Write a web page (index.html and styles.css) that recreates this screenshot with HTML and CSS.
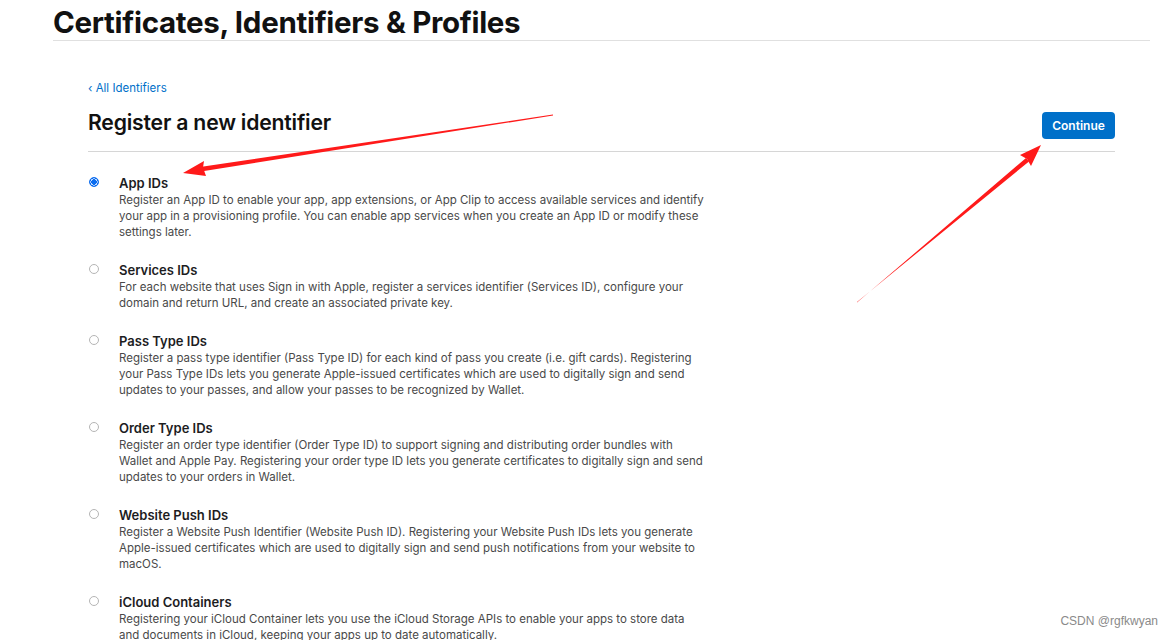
FILE: index.html
```html
<!DOCTYPE html>
<html>
<head>
<meta charset="utf-8">
<link rel="stylesheet" href="styles.css">
</head>
<body>
<div class="page">
  <header class="top">
    <h1 class="top-title">Certificates, Identifiers &amp; Profiles</h1>
  </header>
  <main class="content">
    <a class="back">‹ All Identifiers</a>
    <div class="head">
      <h2 class="head-title">Register a new identifier</h2>
      <button class="btn">Continue</button>
    </div>
    <ul class="list">
      <li class="item">
        <span class="radio checked"></span>
        <div class="body">
          <div class="name">App IDs</div>
          <p class="desc">Register an App ID to enable your app, app extensions, or App Clip to access available services and identify your app in a provisioning profile. You can enable app services when you create an App ID or modify these settings later.</p>
        </div>
      </li>
      <li class="item">
        <span class="radio"></span>
        <div class="body">
          <div class="name">Services IDs</div>
          <p class="desc">For each website that uses Sign in with Apple, register a services identifier (Services ID), configure your domain and return URL, and create an associated private key.</p>
        </div>
      </li>
      <li class="item">
        <span class="radio"></span>
        <div class="body">
          <div class="name">Pass Type IDs</div>
          <p class="desc">Register a pass type identifier (Pass Type ID) for each kind of pass you create (i.e. gift cards). Registering your Pass Type IDs lets you generate Apple-issued certificates which are used to digitally sign and send updates to your passes, and allow your passes to be recognized by Wallet.</p>
        </div>
      </li>
      <li class="item">
        <span class="radio"></span>
        <div class="body">
          <div class="name">Order Type IDs</div>
          <p class="desc">Register an order type identifier (Order Type ID) to support signing and distributing order bundles with Wallet and Apple Pay. Registering your order type ID lets you generate certificates to digitally sign and send updates to your orders in Wallet.</p>
        </div>
      </li>
      <li class="item">
        <span class="radio"></span>
        <div class="body">
          <div class="name">Website Push IDs</div>
          <p class="desc">Register a Website Push Identifier (Website Push ID). Registering your Website Push IDs lets you generate Apple-issued certificates which are used to digitally sign and send push notifications from your website to macOS.</p>
        </div>
      </li>
      <li class="item">
        <span class="radio"></span>
        <div class="body">
          <div class="name">iCloud Containers</div>
          <p class="desc">Registering your iCloud Container lets you use the iCloud Storage APIs to enable your apps to store data and documents in iCloud, keeping your apps up to date automatically.</p>
        </div>
      </li>
    </ul>
  </main>
</div>
<svg class="arrows" width="1173" height="640" viewBox="0 0 1173 640">
  <polygon fill="#ff1a1a" points="553,114.5 200,167 201,171.5 553,115.5"/>
  <polygon fill="#ff1a1a" points="183,173 204,161 203,167.5 206,176"/>
  <polygon fill="#ff1a1a" points="857,302.5 1026,158 1029,161.5 857,302"/>
  <polygon fill="#ff1a1a" points="1041,145 1020,155 1027,159 1031,166"/>
</svg>
<div class="mark">CSDN @rgfkwyan</div>
</body>
</html>
```
FILE: styles.css
```css
html, body {
  margin: 0;
  padding: 0;
  background: #fff;
}
body {
  font-family: Inter, "Noto Sans", "Liberation Sans", sans-serif;
  color: #1d1d1f;
  width: 1173px;
  height: 640px;
  overflow: hidden;
  position: relative;
}
.page {
  margin-left: 53px;
  width: 1097px;
}
.top {
  border-bottom: 1px solid #e0e0e0;
  height: 40px;
}
.top-title {
  margin: 0;
  padding-top: 5px;
  font-size: 29.5px;
  line-height: 34px;
  font-weight: 700;
  letter-spacing: -0.3px;
  color: #111;
}
.content {
  padding: 0 35px;
}
.back {
  display: block;
  margin-top: 40px;
  font-size: 11.5px;
  line-height: 14px;
  color: #0070c9;
}
.head {
  display: flex;
  align-items: flex-end;
  justify-content: space-between;
  border-bottom: 1px solid #d6d6d6;
  padding-bottom: 12px;
  margin-top: 14px;
}
.head-title {
  margin: 0;
  font-size: 21.2px;
  line-height: 26px;
  font-weight: 600;
  letter-spacing: -0.2px;
  color: #111;
  margin-bottom: 4px;
}
.btn {
  background: #0070c9;
  color: #fff;
  border: none;
  border-radius: 4px;
  font-family: inherit;
  font-size: 12px;
  font-weight: 600;
  height: 27px;
  width: 73px;
  padding: 0;
}
.list {
  list-style: none;
  margin: 0;
  padding: 0;
  padding-top: 23px;
}
.item {
  display: flex;
  margin-bottom: 22px;
}
.radio {
  width: 10px;
  height: 10px;
  border-radius: 50%;
  border: 1px solid #b5b5b5;
  box-sizing: border-box;
  margin-left: 1px;
  margin-top: 2px;
  flex: none;
  background: #fff;
}
.radio.checked {
  border: 1px solid #0a6cf0;
  background: radial-gradient(circle, #0a6cf0 0 2.6px, #fff 3px 3.4px, #0a6cf0 3.8px);
}
.body {
  margin-left: 20px;
  width: 589px;
}
.name {
  font-size: 13px;
  line-height: 16px;
  font-weight: 600;
  color: #1d1d1f;
}
.desc {
  margin: 0;
  padding-top: 1px;
  font-size: 11.5px;
  line-height: 16px;
  color: #494949;
}
.arrows {
  position: absolute;
  left: 0;
  top: 0;
  pointer-events: none;
}
.mark {
  position: absolute;
  right: 15px;
  top: 614px;
  font-family: "Liberation Sans", sans-serif;
  font-size: 12px;
  color: #8a8a8a;
}
```
